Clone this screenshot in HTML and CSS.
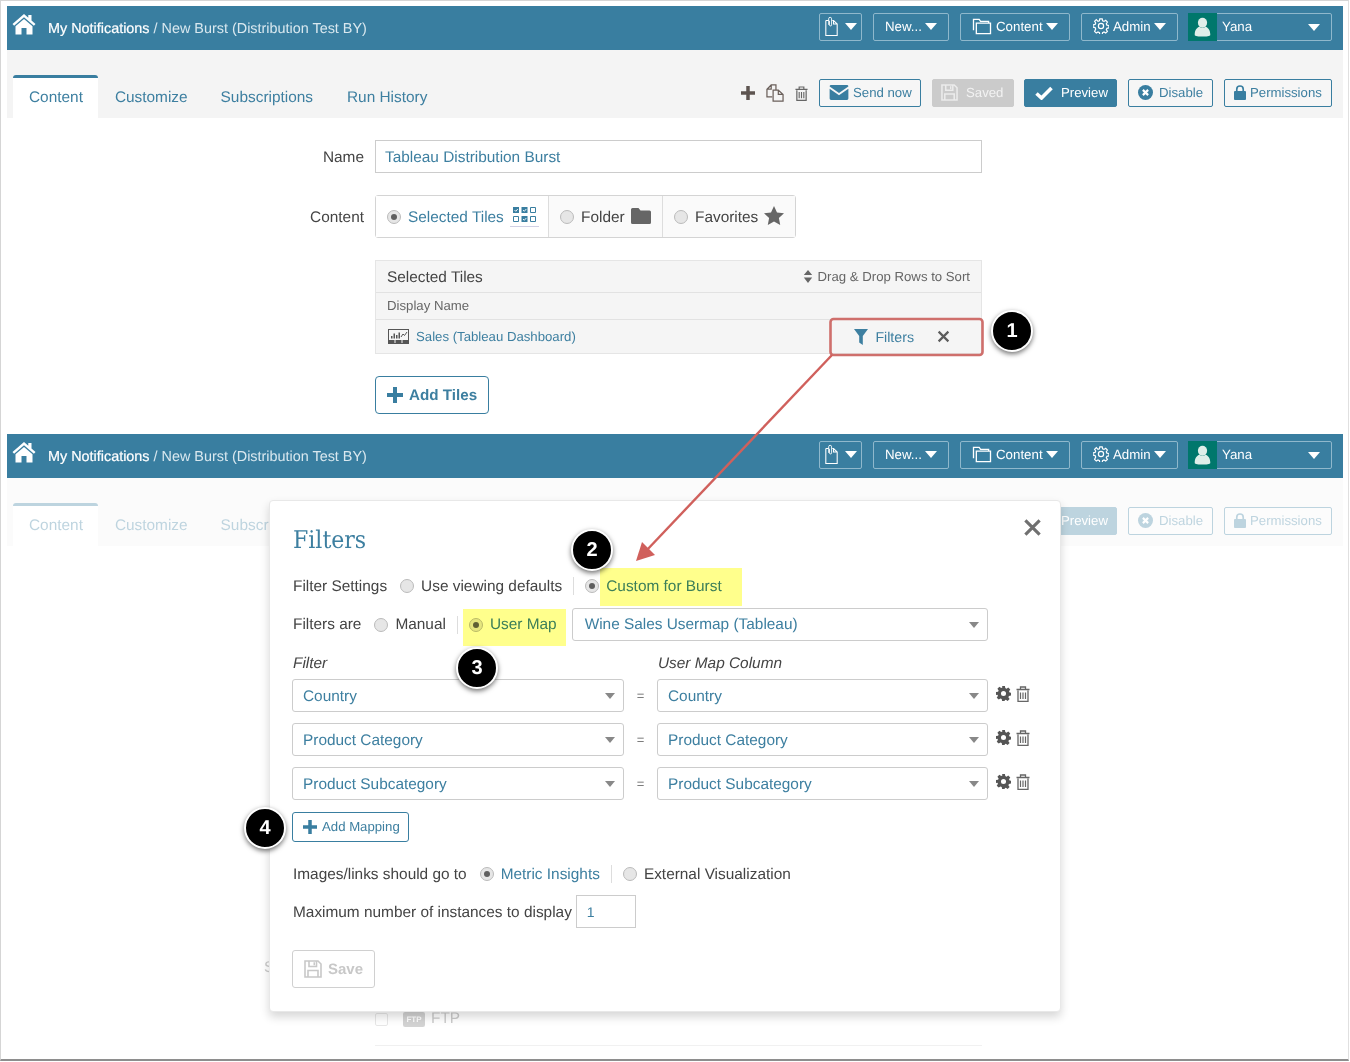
FILE: index.html
```html
<!DOCTYPE html>
<html lang="en">
<head>
<meta charset="utf-8">
<title>New Burst</title>
<link rel="stylesheet" href="styles.css">
</head>
<body>
<svg class="defs" aria-hidden="true">
  <symbol id="i-home" viewBox="0 0 24 22"><path d="M12 1 0.5 11l1.6 1.8L12 4.200l9.900 8.600 1.600-1.800L19.500 7.500V2h-3.200v2.700z" fill="currentColor"/><path d="M12 6 3.500 13.300V21.500H9.500V15h5v6.500h6V13.300z" fill="currentColor"/></symbol>
  <symbol id="i-clip" viewBox="0 0 16 24"><path d="M1 4.500h3.500M9 4.500h1.500L15 9v14H1V4.500M10.500 4.500V9H15" fill="none" stroke="currentColor" stroke-width="1.300"/><path d="M4.500 10V2.500a1.800 1.800 0 0 1 3.600 0V10a1.300 1.300 0 0 1-2.600 0V5" fill="none" stroke="currentColor" stroke-width="1.100"/></symbol>
  <symbol id="i-folders" viewBox="0 0 20 18"><path d="M1 13V1.500h6l1.500 2H17v2M4 16.500V5.500h15v11z" fill="none" stroke="currentColor" stroke-width="1.400"/></symbol>
  <symbol id="i-gearline" viewBox="0 0 16 16"><circle cx="8" cy="8" r="2.600" fill="none" stroke="currentColor" stroke-width="1.200"/><path d="M6.800.8h2.400l.4 2 1.400.6 1.700-1.100 1.700 1.700-1.100 1.700.6 1.400 2 .4v2.400l-2 .4-.6 1.400 1.100 1.700-1.700 1.700-1.700-1.100-1.400.6-.4 2H6.800l-.4-2-1.400-.6-1.700 1.100-1.700-1.700L2.700 11l-.6-1.400-2-.4V6.800l2-.4.6-1.400-1.100-1.700 1.700-1.700L5 3.400l1.400-.6z" fill="none" stroke="currentColor" stroke-width="1.200"/></symbol>
  <symbol id="i-gear" viewBox="0 0 16 16"><path fill-rule="evenodd" d="M6.500 0h3l.4 2.200 1.300.6L13.100 1.500l2.100 2.100-1.300 1.900.6 1.300 1.500.4v3l-2.200.4-.6 1.300 1.300 1.900-2.100 2.100-1.900-1.300-1.300.6L9.500 16h-3l-.4-2.200-1.300-.6-1.900 1.300L.8 12.400l1.300-1.900-.6-1.300L0 9.500v-3l2.200-.4.6-1.300L1.500 2.900 3.600.8l1.900 1.300 1.300-.6zM8 5.300a2.700 2.700 0 1 0 0 5.400 2.700 2.700 0 0 0 0-5.400z" fill="currentColor"/></symbol>
  <symbol id="i-user" viewBox="0 0 24 28"><ellipse cx="12" cy="8" rx="6.500" ry="7" fill="currentColor"/><path d="M1 25c0-8 4-10.500 6.500-11.500 2.500 2 6.500 2 9 0C19 14.500 23 17 23 25c0 1.500-2 2.500-11 2.500S1 26.500 1 25z" fill="currentColor"/></symbol>
  <symbol id="i-plus" viewBox="0 0 16 16"><path d="M6 0h4v6h6v4h-6v6H6v-6H0V6h6z" fill="currentColor"/></symbol>
  <symbol id="i-copy" viewBox="0 0 19 19"><path d="M6.500 13.500H1V5.500L5.500 1H10.500V6M5.500 1V5.500H1M7.500 6.500H13L18 11V18H7.500zM13 6.500V11h5" fill="none" stroke="currentColor" stroke-width="1.300"/></symbol>
  <symbol id="i-trash" viewBox="0 0 14 16"><path d="M2 4.500V15.300H12V4.500M.5 3.500h13M4.500 3.300V1h5v2.300" fill="none" stroke="currentColor" stroke-width="1.300"/><path d="M4.500 6.500v6.500M7 6.500v6.500M9.500 6.500v6.500" fill="none" stroke="currentColor" stroke-width="1.200"/></symbol>
  <symbol id="i-mail" viewBox="0 0 20 16"><path d="M1.500 0h17A1.500 1.500 0 0 1 20 1.500L10 8.500 0 1.500A1.500 1.500 0 0 1 1.500 0z" fill="currentColor"/><path d="M0 4l10 7 10-7v10.500a1.500 1.500 0 0 1-1.500 1.500h-17A1.500 1.500 0 0 1 0 14.500z" fill="currentColor"/></symbol>
  <symbol id="i-save" viewBox="0 0 18 18"><path d="M1 1h13l3 3v13H1zM5 1v5.500h7.500V1M4 17v-6.500h10V17" fill="none" stroke="currentColor" stroke-width="1.600"/><path d="M9.500 2.300h1.500v3H9.500z" fill="currentColor"/></symbol>
  <symbol id="i-check" viewBox="0 0 18 14"><path d="M1.500 7.500l5 4.500L16.500 2" fill="none" stroke="currentColor" stroke-width="3.600"/></symbol>
  <symbol id="i-ban" viewBox="0 0 16 16"><circle cx="8" cy="8" r="8" fill="currentColor"/><path d="M5.200 5.200l5.600 5.600M10.800 5.200l-5.600 5.600" stroke="#fff" stroke-width="2.300"/></symbol>
  <symbol id="i-lock" viewBox="0 0 13 16"><path d="M3 7V4.500a3.500 3.500 0 0 1 7 0V7" fill="none" stroke="currentColor" stroke-width="1.800"/><rect y="6.500" width="13" height="9.500" rx="1" fill="currentColor"/></symbol>
  <symbol id="i-tiles" viewBox="0 0 23 16"><g fill="currentColor"><rect x="0" y="0" width="6" height="6"/><rect x="8.500" y="0" width="6" height="6"/><rect x="8.500" y="9" width="6" height="6"/></g><path d="M17.500.5h5v5h-5zM17.500 9.500h5v5h-5zM.5 9.500h5v5h-5z" fill="none" stroke="currentColor"/><path d="M1.500 3l1.300 1.300L4.800 2M10 3l1.300 1.300L13.300 2M10 12l1.300 1.300 2-2.300" fill="none" stroke="#fff" stroke-width=".9"/></symbol>
  <symbol id="i-folder" viewBox="0 0 20 16"><path d="M1.500 0h6l2 2.500h9A1.500 1.500 0 0 1 20 4v10.500a1.500 1.500 0 0 1-1.500 1.500h-17A1.500 1.500 0 0 1 0 14.500v-13A1.500 1.500 0 0 1 1.500 0z" fill="currentColor"/></symbol>
  <symbol id="i-star" viewBox="0 0 20 19"><path d="M10 0l3 6.400 7 .9-5.100 4.800 1.300 6.900L10 15.600 3.800 19l1.300-6.900L0 7.300l7-.9z" fill="currentColor"/></symbol>
  <symbol id="i-sort" viewBox="0 0 10 14"><path d="M5 0l4.500 5.500H.5zM5 14L.5 8h9z" fill="currentColor"/></symbol>
  <symbol id="i-dash" viewBox="0 0 21 15"><rect x=".5" y=".5" width="20" height="14" fill="none" stroke="currentColor"/><path d="M3 9.500h1.500V7H3zM5.500 9.500H7V4.500H5.500zM8 9.500h1.500V6H8zM10.500 9.500H12V3.500h-1.500z" fill="currentColor"/><path d="M13 8l2-3 1.500 1.500L19 3" fill="none" stroke="currentColor"/><path d="M1 11h19v3H1z" fill="currentColor"/><path d="M7 11v3M14 11v3" stroke="#f5f5f5"/></symbol>
  <symbol id="i-funnel" viewBox="0 0 14 16"><path d="M0 0h14L8.800 7v9l-3.600-2.500V7z" fill="currentColor"/></symbol>
  <symbol id="i-x" viewBox="0 0 12 12"><path d="M1.500 1.500l9 9M10.500 1.500l-9 9" fill="none" stroke="currentColor" stroke-width="2"/></symbol>
</svg>

<div class="shot">

  <section class="screen screen-top">
    <header class="topbar">
      <a class="crumbs"><svg class="ic-home"><use href="#i-home"/></svg><b class="crumb-main">My Notifications</b><span class="crumb-rest">&nbsp;/ New Burst (Distribution Test BY)</span></a>
      <nav class="topnav">
        <a class="navbtn nb-clip"><svg class="ic-clip"><use href="#i-clip"/></svg><i class="caret"></i></a>
        <a class="navbtn nb-new">New...<i class="caret"></i></a>
        <a class="navbtn nb-content"><svg class="ic-folders"><use href="#i-folders"/></svg>Content<i class="caret"></i></a>
        <a class="navbtn nb-admin"><svg class="ic-gearline"><use href="#i-gearline"/></svg>Admin<i class="caret"></i></a>
        <a class="navbtn nb-user"><span class="avatar"><svg class="ic-user"><use href="#i-user"/></svg></span><span class="uname">Yana</span><i class="caret"></i></a>
      </nav>
    </header>
    <div class="tabbar">
      <ul class="tabs">
        <li class="tab active">Content</li>
        <li class="tab">Customize</li>
        <li class="tab">Subscriptions</li>
        <li class="tab">Run History</li>
      </ul>
      <div class="tools">
        <svg class="tool-plus"><use href="#i-plus"/></svg>
        <svg class="tool-copy"><use href="#i-copy"/></svg>
        <svg class="tool-trash"><use href="#i-trash"/></svg>
        <a class="btn b-send"><svg class="ic-mail"><use href="#i-mail"/></svg>Send now</a>
        <a class="btn b-saved"><svg class="ic-save"><use href="#i-save"/></svg>Saved</a>
        <a class="btn b-preview"><svg class="ic-check"><use href="#i-check"/></svg>Preview</a>
        <a class="btn b-disable"><svg class="ic-ban"><use href="#i-ban"/></svg>Disable</a>
        <a class="btn b-perm"><svg class="ic-lock"><use href="#i-lock"/></svg>Permissions</a>
      </div>
    </div>
    <form class="form">
      <label class="flabel">Name</label>
      <div class="textinput">Tableau Distribution Burst</div>
      <label class="flabel">Content</label>
      <div class="segment">
        <div class="seg seg-on"><i class="radio on"></i><span class="blue seg-t">Selected Tiles</span><span class="tiles-ic"><svg class="ic-tiles"><use href="#i-tiles"/></svg></span></div>
        <div class="seg seg-f"><i class="radio"></i><span class="seg-t">Folder</span><svg class="ic-folder"><use href="#i-folder"/></svg></div>
        <div class="seg seg-s"><i class="radio"></i><span class="seg-t">Favorites</span><svg class="ic-star"><use href="#i-star"/></svg></div>
      </div>
      <div class="tablewrap">
        <div class="t-head"><span class="t-title">Selected Tiles</span><span class="t-sort"><svg class="ic-sort"><use href="#i-sort"/></svg>Drag &amp; Drop Rows to Sort</span></div>
        <div class="t-cols">Display Name</div>
        <div class="t-row">
          <span class="t-name"><svg class="ic-dash"><use href="#i-dash"/></svg>Sales (Tableau Dashboard)</span>
          <span class="t-acts"><svg class="ic-funnel"><use href="#i-funnel"/></svg><span class="t-filters">Filters</span><svg class="ic-x"><use href="#i-x"/></svg></span>
        </div>
      </div>
      <a class="addtiles"><svg class="ic-plus16"><use href="#i-plus"/></svg>Add Tiles</a>
    </form>
  </section>

  <section class="screen screen-bottom">
    <header class="topbar">
      <a class="crumbs"><svg class="ic-home"><use href="#i-home"/></svg><b class="crumb-main">My Notifications</b><span class="crumb-rest">&nbsp;/ New Burst (Distribution Test BY)</span></a>
      <nav class="topnav">
        <a class="navbtn nb-clip"><svg class="ic-clip"><use href="#i-clip"/></svg><i class="caret"></i></a>
        <a class="navbtn nb-new">New...<i class="caret"></i></a>
        <a class="navbtn nb-content"><svg class="ic-folders"><use href="#i-folders"/></svg>Content<i class="caret"></i></a>
        <a class="navbtn nb-admin"><svg class="ic-gearline"><use href="#i-gearline"/></svg>Admin<i class="caret"></i></a>
        <a class="navbtn nb-user"><span class="avatar"><svg class="ic-user"><use href="#i-user"/></svg></span><span class="uname">Yana</span><i class="caret"></i></a>
      </nav>
    </header>
    <div class="tabbar faded">
      <ul class="tabs">
        <li class="tab active">Content</li>
        <li class="tab">Customize</li>
        <li class="tab">Subscriptions</li>
      </ul>
      <div class="tools">
        <a class="btn b-preview"><svg class="ic-check"><use href="#i-check"/></svg>Preview</a>
        <a class="btn b-disable"><svg class="ic-ban"><use href="#i-ban"/></svg>Disable</a>
        <a class="btn b-perm"><svg class="ic-lock"><use href="#i-lock"/></svg>Permissions</a>
      </div>
    </div>
    <div class="behind">
      <div class="behind-label">Send</div>
      <div class="behind-row"><i class="checkbox"></i><span class="ftp-chip">FTP</span><span>FTP</span></div>
      <div class="behind-rule"></div>
    </div>

    <div class="modal">
      <h2 class="m-title">Filters</h2>
      <svg class="m-close"><use href="#i-x"/></svg>
      <div class="m-row r-settings">
        <span class="m-lab">Filter Settings</span>
        <i class="radio"></i><span>Use viewing defaults</span>
        <span class="vsep"></span>
        <i class="radio on"></i><span class="blue">Custom for Burst</span>
      </div>
      <div class="m-row r-are">
        <span class="m-lab">Filters are</span>
        <i class="radio"></i><span>Manual</span>
        <span class="vsep"></span>
        <i class="radio on"></i><span class="blue">User Map</span>
        <div class="select sel-map">Wine Sales Usermap (Tableau)<i class="sel-caret"></i></div>
      </div>
      <div class="map-grid">
        <em class="col-h">Filter</em><span></span><em class="col-h">User Map Column</em><span></span>
        <div class="select">Country<i class="sel-caret"></i></div><span class="eq">=</span><div class="select">Country<i class="sel-caret"></i></div>
        <span class="row-ic"><svg class="ic-gear"><use href="#i-gear"/></svg><svg class="ic-trash2"><use href="#i-trash"/></svg></span>
        <div class="select">Product Category<i class="sel-caret"></i></div><span class="eq">=</span><div class="select">Product Category<i class="sel-caret"></i></div>
        <span class="row-ic"><svg class="ic-gear"><use href="#i-gear"/></svg><svg class="ic-trash2"><use href="#i-trash"/></svg></span>
        <div class="select">Product Subcategory<i class="sel-caret"></i></div><span class="eq">=</span><div class="select">Product Subcategory<i class="sel-caret"></i></div>
        <span class="row-ic"><svg class="ic-gear"><use href="#i-gear"/></svg><svg class="ic-trash2"><use href="#i-trash"/></svg></span>
      </div>
      <a class="addmap"><svg class="ic-plus14"><use href="#i-plus"/></svg>Add Mapping</a>
      <div class="m-row r-links">
        <span class="m-lab">Images/links should go to</span>
        <i class="radio on"></i><span class="blue">Metric Insights</span>
        <span class="vsep"></span>
        <i class="radio"></i><span>External Visualization</span>
      </div>
      <div class="m-row r-max">
        <span>Maximum number of instances to display</span>
        <div class="numinput">1</div>
      </div>
      <a class="savebtn"><svg class="ic-save2"><use href="#i-save"/></svg>Save</a>
    </div>
  </section>

  <div class="hl hl-2"></div>
  <div class="hl hl-3"></div>

  <svg class="arrow" viewBox="0 0 1350 1062">
    <rect x="830.500" y="319" width="152" height="36" rx="3" fill="none" stroke="#cf6f6c" stroke-width="2.600"/>
    <line x1="832" y1="355" x2="646" y2="551" stroke="#d0605c" stroke-width="2.400"/>
    <polygon points="636,561 642,542 655,555" fill="#d0605c"/>
  </svg>
  <span class="badge b1">1</span>
  <span class="badge b2">2</span>
  <span class="badge b3">3</span>
  <span class="badge b4">4</span>
</div>
</body>
</html>
```
FILE: styles.css
```css
* { box-sizing: border-box; }
html, body { margin: 0; padding: 0; background: #fff; }
body { font-family: "Liberation Sans", Arial, sans-serif; font-size: 15.400px; color: #444; text-rendering: geometricPrecision; }
a { color: inherit; text-decoration: none; }
svg { display: block; flex: none; }
i { font-style: normal; }
.defs { position: absolute; width: 0; height: 0; overflow: hidden; }

.shot { position: relative; width: 1349px; height: 1061px; overflow: hidden; padding: 5px 6px 0; border: 1px solid #d5d5d5; border-bottom: 2px solid #8e8e8e; border-right-color: #e0e0e0; background: #fff; }
.screen { position: relative; width: 1336px; }
.screen-top { height: 428px; }
.screen-bottom { height: 626px; }

.topbar { display: flex; align-items: flex-start; justify-content: space-between; height: 44px; background: #397ea0; color: #fff; padding: 7px 11px 0 5px; }
.crumbs { display: flex; align-items: center; height: 32px; font-size: 14.400px; color: #d9e8ef; }
.ic-home { width: 24px; height: 22px; margin-top: -11px; margin-right: 12px; color: #fff; }
.crumb-main { font-weight: normal; color: #fff; -webkit-text-stroke: .2px #fff; }
.topnav { display: flex; gap: 11px; }
.navbtn { display: flex; align-items: center; height: 28px; border: 1px solid #8fb8cc; border-radius: 2px; font-size: 13.300px; color: #fff; padding: 0 11px 2px; }
.caret { display: block; width: 0; height: 0; border: 6px solid transparent; border-top: 7px solid #fff; border-bottom: 0; margin-left: 3px; }
.nb-clip { width: 43px; padding: 0 0 2px 5px; }
.ic-clip { width: 13px; height: 21px; margin-right: 7px; }
.nb-clip .caret { margin-left: 0; }
.nb-new { width: 76px; }
.nb-content { width: 110px; }
.ic-folders { width: 20px; height: 17px; margin-right: 4px; }
.nb-admin { width: 97px; }
.ic-gearline { width: 16px; height: 16px; margin-right: 4px; }
.nb-user { width: 144px; margin-left: -1px; padding: 0 11px 0 0; }
.avatar { display: flex; align-items: center; justify-content: center; width: 29px; height: 28px; margin: -1px 0 -1px -1px; background: #00776c; }
.ic-user { width: 17px; height: 20px; color: #dfeee9; }
.uname { flex: 1; margin-left: 5px; padding-bottom: 2px; }

.tabbar { display: flex; align-items: flex-end; justify-content: space-between; height: 68px; background: #f4f4f4; padding: 0 11px 0 6px; }
.tabs { display: flex; list-style: none; margin: 0; padding: 0; }
.tab { height: 43px; padding: 13px 17px 0 16px; color: #3d7fa0; font-size: 15.400px; line-height: 19px; }
.tab:nth-child(2) { padding-left: 17px; }
.tab:nth-child(3) { padding-right: 18px; }
.tab.active { background: #fff; border-top: 3px solid #397ea0; border-radius: 3px 3px 0 0; padding-top: 10px; padding-right: 15px; }
.tools { display: flex; align-items: center; height: 28px; margin-bottom: 11px; gap: 11px; }
.tool-plus { width: 14px; height: 14px; color: #5d5450; }
.tool-copy { width: 18px; height: 18px; color: #6a5f5a; }
.tool-trash { width: 13px; height: 15px; color: #666; }
.btn { display: flex; align-items: center; height: 28px; border: 1px solid #397ea0; border-radius: 2px; padding-bottom: 1px; font-size: 13.200px; color: #3d7fa0; background: #f6f6f6; }
.b-send { width: 102px; padding-left: 9px; }
.ic-mail { width: 20px; height: 15px; margin-right: 4px; color: #397ea0; }
.b-saved { width: 82px; margin-right: -1px; padding-left: 8px; background: #cbcbcb; border-color: #cbcbcb; color: #f2f2f2; }
.ic-save { width: 17px; height: 17px; margin-right: 8px; color: #ececec; }
.b-preview { width: 93px; padding-left: 10px; background: #397ea0; color: #fff; }
.ic-check { width: 18px; height: 14px; margin-right: 8px; }
.b-disable { width: 85px; padding-left: 9px; }
.ic-ban { width: 15px; height: 15px; margin-right: 6px; color: #397ea0; }
.b-perm { width: 108px; padding-left: 9px; }
.ic-lock { width: 12px; height: 15px; margin-right: 4px; color: #397ea0; }
.faded { opacity: .33; }

.form { display: grid; grid-template-columns: 357px 607px; column-gap: 11px; row-gap: 22px; padding-top: 22px; }
.flabel { grid-column: 1; justify-self: end; align-self: center; padding-top: 2px; color: #444; }
.textinput { grid-column: 2; height: 33px; border: 1px solid #ccc; padding: 8px 9px 0; line-height: 18px; color: #3d7fa0; }
.segment { grid-column: 2; display: flex; height: 43px; width: 421px; border: 1px solid #d4d4d4; border-radius: 3px; }
.seg { display: flex; align-items: center; padding-left: 11px; background: #fafafa; border-left: 1px solid #ddd; }
.seg-t { padding-top: 2px; }
.seg-on { width: 172px; background: #fff; border-left: 0; }
.seg-f { width: 114px; }
.seg-s { flex: 1; }
.blue { color: #3d7fa0; }
.radio { display: block; flex: none; position: relative; width: 14px; height: 14px; border-radius: 50%; border: 1px solid #bbb; background: #e6e6e6; margin-right: 7px; }
.radio.on::after { content: ""; position: absolute; left: 3px; top: 3px; width: 6px; height: 6px; border-radius: 50%; background: #5f5f5f; }
.tiles-ic { margin-left: 6px; padding: 0 3px 3px; border-bottom: 1px solid #d0d0e4; }
.ic-tiles { width: 23px; height: 16px; color: #397ea0; }
.ic-folder { width: 20px; height: 16px; color: #666; margin-left: 6px; margin-top: -2px; }
.ic-star { width: 20px; height: 19px; color: #666; margin-left: 6px; margin-top: -2px; }
.tablewrap { grid-column: 2; height: 94px; border: 1px solid #e5e5e5; background: #f5f5f5; }
.t-head { display: flex; align-items: center; justify-content: space-between; height: 32px; padding: 0 11px; border-bottom: 1px solid #e2e2e2; }
.t-title { color: #444; padding-top: 2px; }
.t-sort { display: flex; align-items: center; color: #666; font-size: 13.200px; }
.ic-sort { width: 10px; height: 13px; margin-right: 5px; color: #666; }
.t-cols { height: 27px; line-height: 25px; padding-left: 11px; font-size: 13.200px; color: #666; border-bottom: 1px solid #e2e2e2; }
.t-row { display: flex; align-items: center; justify-content: space-between; height: 33px; padding-left: 12px; }
.t-name { display: flex; align-items: center; color: #3d7fa0; font-size: 13.200px; }
.ic-dash { width: 21px; height: 15px; margin-right: 7px; color: #555; }
.t-acts { display: flex; align-items: center; padding-right: 31px; color: #3d7fa0; font-size: 14.200px; }
.ic-funnel { width: 14px; height: 16px; margin-right: 7px; }
.t-filters { margin-right: 23px; padding-top: 2px; }
.ic-x { width: 13px; height: 13px; color: #5d5d5d; }
.addtiles { grid-column: 2; display: flex; align-items: center; justify-self: start; width: 114px; height: 38px; padding-left: 11px; border: 1px solid #397ea0; border-radius: 4px; color: #3d7fa0; font-weight: bold; font-size: 15.200px; }
.ic-plus16 { width: 16px; height: 16px; margin-right: 6px; color: #397ea0; }

.behind { opacity: .28; padding-left: 257px; padding-top: 413px; }
.behind-label { height: 50px; line-height: 18px; }
.behind-row { display: flex; align-items: center; height: 20px; margin-left: 111px; }
.checkbox { display: block; width: 13px; height: 13px; border: 1px solid #aaa; border-radius: 2px; margin-right: 15px; }
.ftp-chip { width: 22px; height: 15px; line-height: 15px; text-align: center; font-size: 8px; font-weight: bold; color: #fff; background: #666; border-radius: 2px; margin-right: 6px; }
.behind-rule { height: 1px; margin: 16px 0 0 111px; width: 607px; background: #ccc; }

.modal { position: absolute; left: 262px; top: 66px; width: 792px; height: 512px; padding: 0 23px; background: #fff; border: 1px solid #e8e8e8; border-radius: 4px; box-shadow: 0 5px 10px rgba(0,0,0,.16); }
.m-title { margin: 22px 0 0; height: 33px; line-height: 33px; font-family: "DejaVu Serif Condensed", "DejaVu Serif", serif; font-stretch: condensed; font-weight: normal; font-size: 24.500px; color: #3d7fa0; }
.m-close { position: absolute; right: 18px; top: 17px; width: 19px; height: 19px; color: #707070; }
.m-row { display: flex; align-items: center; }
.r-settings { height: 20px; margin-top: 20px; }
.r-settings > span:not(.vsep), .r-links > span:not(.vsep), .r-max > span { padding-top: 2px; }
.r-are { height: 33px; margin-top: 12px; }
.m-lab { margin-right: 13px; }
.vsep { display: block; width: 1px; height: 18px; background: #ddd; margin: 0 11px; }
.select { position: relative; height: 33px; border: 1px solid #ccc; border-radius: 3px; padding: 0 10px; line-height: 33px; color: #3d7fa0; }
.sel-caret { position: absolute; right: 8px; top: 13px; width: 0; height: 0; border: 5.500px solid transparent; border-top: 6px solid #888; border-bottom: 0; }
.sel-map { width: 416px; margin-left: 15px; padding-left: 12px; line-height: 31px; }
.map-grid { display: grid; grid-template-columns: 332px 33px 331px auto; grid-template-rows: 22px repeat(3, 33px); row-gap: 11px; margin: 5px 0 0 -1px; align-items: center; }
.col-h { align-self: end; line-height: 18px; margin: 0 0 -5px 1px; color: #444; }
.eq { text-align: center; color: #555; font-size: 13px; }
.row-ic { display: flex; align-items: center; gap: 5px; padding-left: 8px; margin-top: -4px; }
.ic-gear { width: 15px; height: 15px; color: #555; }
.ic-trash2 { width: 14px; height: 16px; color: #666; }
.addmap { display: flex; align-items: center; width: 117px; height: 30px; margin: 12px 0 0 -1px; padding: 0 0 1px 10px; border: 1px solid #397ea0; border-radius: 3px; color: #3d7fa0; font-size: 13.200px; }
.ic-plus14 { width: 14px; height: 14px; margin-right: 5px; color: #397ea0; }
.r-links { height: 20px; margin-top: 22px; }
.r-max { height: 33px; margin-top: 11px; }
.numinput { width: 60px; height: 33px; margin-left: 4px; padding: 0 10px; border: 1px solid #ccc; line-height: 32px; color: #3d7fa0; font-size: 14px; }
.savebtn { display: flex; align-items: center; width: 83px; height: 38px; margin: 22px 0 0 -1px; padding-left: 11px; border: 1px solid #d0d0d0; border-radius: 3px; color: #c8c8c8; font-weight: bold; font-size: 15px; }
.ic-save2 { width: 18px; height: 18px; margin-right: 6px; color: #c8c8c8; }

.hl { position: absolute; background: #ffff8c; mix-blend-mode: multiply; }
.hl-2 { left: 599px; top: 567px; width: 142px; height: 38px; }
.hl-3 { left: 462px; top: 608px; width: 103px; height: 37px; }
.arrow { position: absolute; left: -1px; top: -1px; width: 1350px; height: 1062px; pointer-events: none; }
.badge { position: absolute; display: flex; align-items: center; justify-content: center; width: 42px; height: 42px; border-radius: 50%; background: #000; border: 2px solid #fff; box-shadow: 0 2px 5px rgba(0,0,0,.55); color: #fff; font-weight: bold; font-size: 20px; }
.b1 { left: 990px; top: 309px; }
.b2 { left: 570px; top: 528px; }
.b3 { left: 455px; top: 646px; }
.b4 { left: 243px; top: 806px; }
```
